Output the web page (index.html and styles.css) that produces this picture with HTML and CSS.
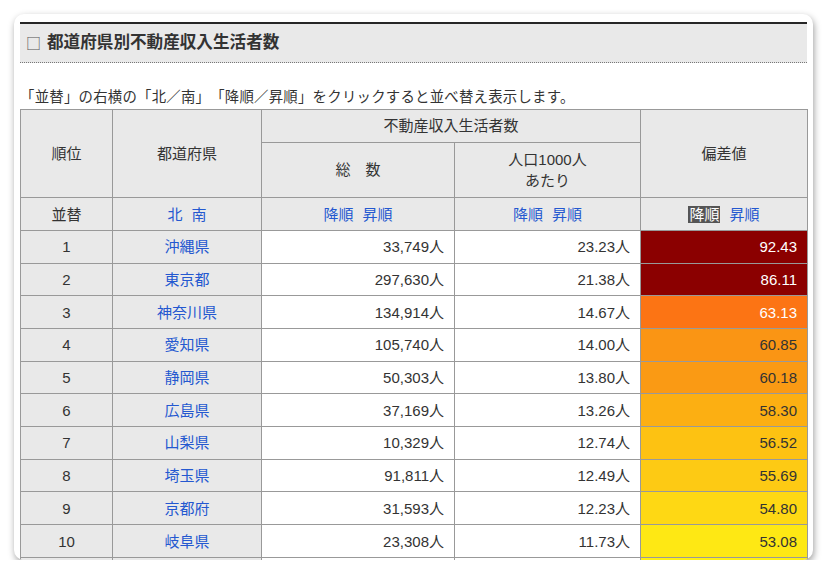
FILE: index.html
```html
<!DOCTYPE html>
<html lang="ja">
<head>
<meta charset="utf-8">
<title>都道府県別不動産収入生活者数</title>
<link rel="stylesheet" href="styles.css">
</head>
<body>
<div class="window">
  <div class="section-head"><span class="box">□</span><span class="title">都道府県別不動産収入生活者数</span></div>
  <p class="note">「並替」の右横の「北／南」「降順／昇順」をクリックすると並べ替え表示します。</p>
  <table class="rank">
    <colgroup>
      <col class="c1"><col class="c2"><col class="c3"><col class="c4"><col class="c5">
    </colgroup>
    <tr class="h1">
      <th rowspan="2">順位</th>
      <th rowspan="2">都道府県</th>
      <th colspan="2">不動産収入生活者数</th>
      <th rowspan="2">偏差値</th>
    </tr>
    <tr class="h2">
      <th>総　数</th>
      <th>人口1000人<br>あたり</th>
    </tr>
    <tr class="sort">
      <th>並替</th>
      <th><a href="#">北</a> <a class="second" href="#">南</a></th>
      <th><a href="#">降順</a> <a class="second" href="#">昇順</a></th>
      <th><a href="#">降順</a> <a class="second" href="#">昇順</a></th>
      <th><span class="sel">降順</span> <a class="second" href="#">昇順</a></th>
    </tr>
    <tr><td class="g">1</td><td class="g"><a href="#">沖縄県</a></td><td class="n">33,749人</td><td class="n">23.23人</td><td class="v light" style="background:#8b0000">92.43</td></tr>
    <tr><td class="g">2</td><td class="g"><a href="#">東京都</a></td><td class="n">297,630人</td><td class="n">21.38人</td><td class="v light" style="background:#8b0000">86.11</td></tr>
    <tr><td class="g">3</td><td class="g"><a href="#">神奈川県</a></td><td class="n">134,914人</td><td class="n">14.67人</td><td class="v light" style="background:#fc7414">63.13</td></tr>
    <tr><td class="g">4</td><td class="g"><a href="#">愛知県</a></td><td class="n">105,740人</td><td class="n">14.00人</td><td class="v" style="background:#fa9514">60.85</td></tr>
    <tr><td class="g">5</td><td class="g"><a href="#">静岡県</a></td><td class="n">50,303人</td><td class="n">13.80人</td><td class="v" style="background:#fa9a14">60.18</td></tr>
    <tr><td class="g">6</td><td class="g"><a href="#">広島県</a></td><td class="n">37,169人</td><td class="n">13.26人</td><td class="v" style="background:#fcaf12">58.30</td></tr>
    <tr><td class="g">7</td><td class="g"><a href="#">山梨県</a></td><td class="n">10,329人</td><td class="n">12.74人</td><td class="v" style="background:#fdc212">56.52</td></tr>
    <tr><td class="g">8</td><td class="g"><a href="#">埼玉県</a></td><td class="n">91,811人</td><td class="n">12.49人</td><td class="v" style="background:#fdca14">55.69</td></tr>
    <tr><td class="g">9</td><td class="g"><a href="#">京都府</a></td><td class="n">31,593人</td><td class="n">12.23人</td><td class="v" style="background:#fed814">54.80</td></tr>
    <tr><td class="g">10</td><td class="g"><a href="#">岐阜県</a></td><td class="n">23,308人</td><td class="n">11.73人</td><td class="v" style="background:#fee814">53.08</td></tr>
    <tr><td class="g"></td><td class="g"></td><td class="n"></td><td class="n"></td><td class="v" style="background:#fef014"></td></tr>
  </table>
</div>
</body>
</html>
```

FILE: styles.css
```css
html, body {
  margin: 0;
  padding: 0;
  background: #ffffff;
}

body {
  font-family: "Liberation Sans", "Noto Sans CJK JP", sans-serif;
  color: #333333;
  font-size: 14.4px;
  text-spacing-trim: space-all;
}

.window {
  margin: 14px 0 0 14px;
  width: 799px;
  height: 546px;
  box-sizing: border-box;
  padding: 8px 6px 0 6px;
  background: #ffffff;
  border-radius: 10px;
  box-shadow: 1px 3px 7px rgba(0, 0, 0, 0.38);
  overflow: hidden;
}

.section-head {
  border-top: 2px solid #262626;
  border-bottom: 1px dotted #777777;
  background: #e9e9e9;
  height: 38px;
  padding-left: 6px;
  display: flex;
  align-items: center;
  gap: 6px;
  color: #333333;
}

.section-head .box {
  font-family: "Noto Sans CJK JP", sans-serif;
  font-size: 15px;
  line-height: 38px;
  font-weight: normal;
  color: #555555;
}

.section-head .title {
  font-size: 16.6px;
  line-height: 38px;
  font-weight: bold;
}

.note {
  margin: 24px 0 1px 0;
  line-height: 21px;
  font-size: 14.4px;
  letter-spacing: 0.24px;
  color: #333333;
  white-space: nowrap;
}

.rank {
  width: 787px;
  border-collapse: collapse;
  table-layout: fixed;
  border: 1px solid #999999;
}

.rank col.c1 { width: 92px; }
.rank col.c2 { width: 149px; }
.rank col.c3 { width: 193px; }
.rank col.c4 { width: 186px; }
.rank col.c5 { width: 167px; }

.rank th,
.rank td {
  border: 1px solid #999999;
  padding: 0 10px;
  line-height: 21px;
  font-size: 15px;
}

.rank th {
  background: #e9e9e9;
  font-weight: normal;
  text-align: center;
  vertical-align: middle;
}

.rank tr { height: 32.7px; }
.rank tr.h1 { height: 32.7px; }
.rank tr.h2 { height: 55.6px; }

.rank a {
  color: #2458d0;
  text-decoration: none;
}

.rank a.second {
  margin-left: 5px;
}

.rank .sel {
  background: #555555;
  color: #ffffff;
  padding: 0 1px;
}

.rank td.g {
  background: #e9e9e9;
  text-align: center;
}

.rank td.n {
  background: #ffffff;
  text-align: right;
}

.rank td.v {
  text-align: right;
  color: #333333;
}

.rank td.v.light {
  color: #ffffff;
}
```
